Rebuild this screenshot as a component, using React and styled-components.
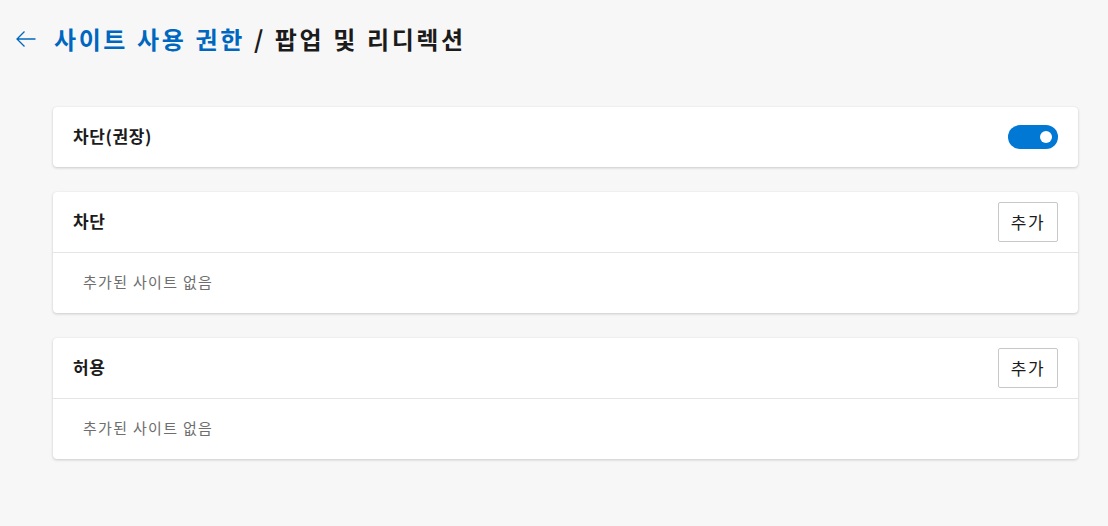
import React from "react"
import styled, { createGlobalStyle } from "styled-components"

const GlobalStyle = createGlobalStyle`
  html, body {
    margin: 0;
    padding: 0;
    background: #f7f7f7;
    font-family: "Noto Sans CJK KR", "Noto Sans", sans-serif;
    color: #1b1b1b;
  }
`

const Page = styled.div`
  width: 1108px;
  height: 526px;
  box-sizing: border-box;
  padding: 19px 30px 0 12px;
`

const Header = styled.div`
  display: flex;
  align-items: center;
  height: 40px;
  gap: 14px;
`

const BackButton = styled.button`
  display: flex;
  align-items: center;
  justify-content: center;
  width: 28px;
  height: 28px;
  padding: 0;
  border: none;
  background: transparent;
  color: #0067c0;
  cursor: pointer;
`

const Title = styled.h1`
  margin: 0 0 2px;
  font-size: 24px;
  font-weight: 700;
  letter-spacing: 2.6px;
  word-spacing: 1px;
  color: #1b1b1b;
`

const Crumb = styled.a`
  color: #0067c0;
  text-decoration: none;
`

const List = styled.div`
  display: flex;
  flex-direction: column;
  gap: 25px;
  margin-top: 48px;
  margin-left: 41px;
`

const Card = styled.section`
  background: #ffffff;
  border-radius: 4px;
  box-shadow: 0 1px 3px rgba(0, 0, 0, 0.18), 0 0 1px rgba(0, 0, 0, 0.08);
`

const Row = styled.div`
  display: flex;
  align-items: center;
  justify-content: space-between;
  height: 60px;
  padding: 0 20px;
  border-bottom: ${p => (p.$divider ? "1px solid #e5e5e5" : "none")};
`

const Label = styled.span`
  margin-bottom: 3px;
  font-size: 17px;
  font-weight: 700;
  letter-spacing: 0.6px;
`

const Empty = styled.div`
  height: 60px;
  box-sizing: border-box;
  display: flex;
  align-items: center;
  padding: 0 30px 3px;
  font-size: 15px;
  letter-spacing: 1.3px;
  color: #6e6e6e;
`

const Toggle = styled.span`
  position: relative;
  display: inline-block;
  width: 50px;
  height: 24px;
  border-radius: 12px;
  background: #0078d4;

  &::after {
    content: "";
    position: absolute;
    top: 6px;
    right: 6px;
    width: 12px;
    height: 12px;
    border-radius: 50%;
    background: #ffffff;
  }
`

const AddButton = styled.button`
  width: 60px;
  height: 40px;
  padding: 0 0 2px;
  border: 1px solid #c8c8c8;
  border-radius: 2px;
  background: #ffffff;
  font-family: inherit;
  font-size: 17px;
  letter-spacing: 1.5px;
  color: #1b1b1b;
  cursor: pointer;
`

const sections = [
  { title: "차단" },
  { title: "허용" },
]

const App = () => (
  <>
    <GlobalStyle />
    <Page>
      <Header>
        <BackButton aria-label="뒤로">
          <svg width="24" height="24" viewBox="0 0 24 24" fill="none">
            <path
              d="M21.5 12H3M10.5 4.5L3 12l7.5 7.5"
              stroke="currentColor"
              strokeWidth="1.3"
            />
          </svg>
        </BackButton>
        <Title>
          <Crumb href="#">사이트 사용 권한</Crumb> / 팝업 및 리디렉션
        </Title>
      </Header>
      <List>
        <Card>
          <Row>
            <Label>차단(권장)</Label>
            <Toggle />
          </Row>
        </Card>
        {sections.map(section => (
          <Card key={section.title}>
            <Row $divider>
              <Label>{section.title}</Label>
              <AddButton>추가</AddButton>
            </Row>
            <Empty>추가된 사이트 없음</Empty>
          </Card>
        ))}
      </List>
    </Page>
  </>
)

export default App
